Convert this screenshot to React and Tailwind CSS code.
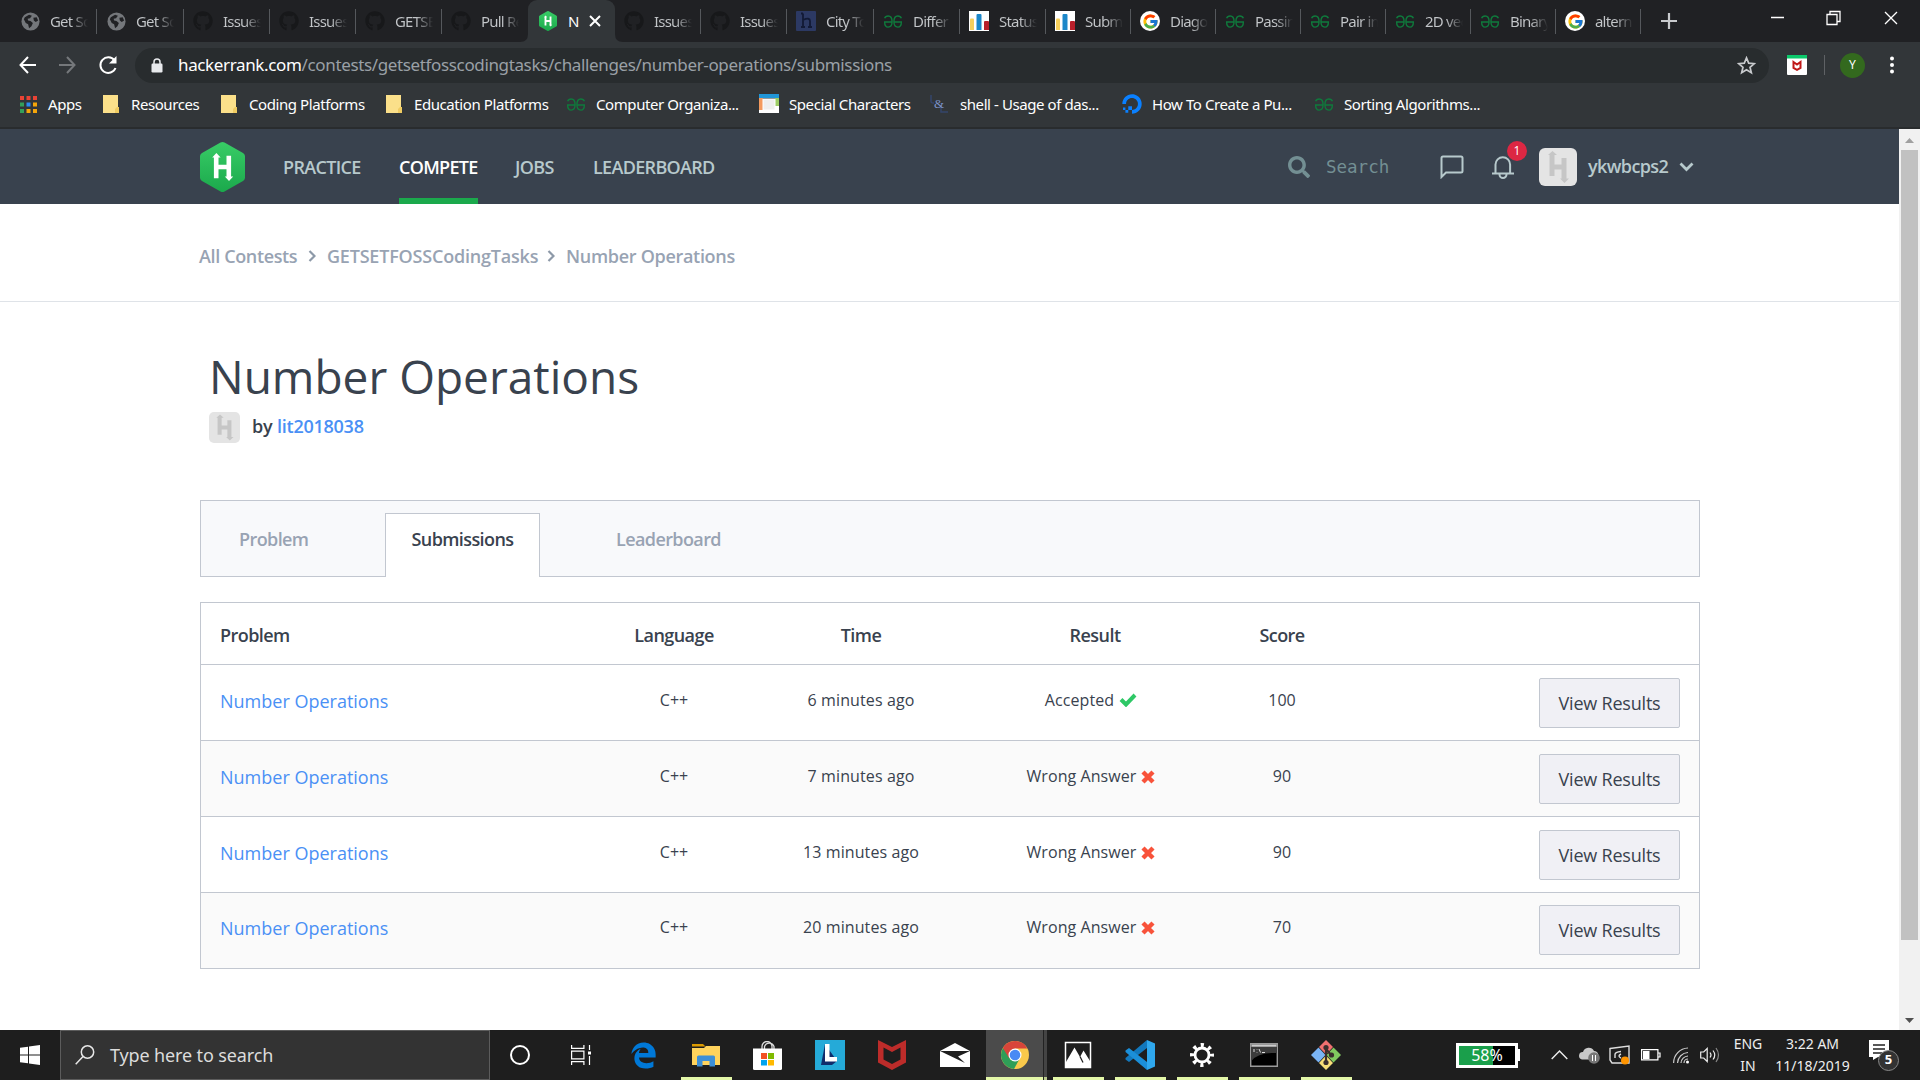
import React from "react";
import { FaGithub, FaDigitalOcean, FaEdgeLegacy, FaSearch } from "react-icons/fa";
import { FcGoogle } from "react-icons/fc";

const UI = "font-['Noto_Sans','Open_Sans',sans-serif]";

function Globe() {
  return (
    <svg viewBox="0 0 20 20" className="size-[19px]">
      <circle cx="10" cy="10" r="9.5" fill="#74777b" />
      <path d="M4 5.5 8.5 3l3 1-2 2.500-2.500.5.5 2 2.500.5 2.500 2-1.500 3.500-2.500 2-1-4-2.500-1.500L3 7.500z M13 6l3.500-.5L18 9l-2.500 1.500-2-1.500z" fill="#202124" />
    </svg>
  );
}

function Gfg() {
  return (
    <svg viewBox="0 0 20 14" className="h-[13px] w-5" fill="none" stroke="#0f7a3c" strokeWidth="1.500">
      <path d="M1 3.500C1.500 2 3 1 4.800 1 7.500 1 9 3.500 9 7s-1.500 6-4.200 6C2.500 13 1 11.500 1 7.500h8" />
      <path d="M19 3.500C18.500 2 17 1 15.200 1 12.500 1 11 3.500 11 7s1.500 6 4.200 6c2.300 0 3.800-1.500 3.800-5.500h-8" />
    </svg>
  );
}

function Bars() {
  return (
    <svg viewBox="0 0 20 20" className="size-5">
      <rect width="20" height="20" fill="#fff" />
      <path d="M1 19V8.500Q1 7.500 2 7.500h2Q5 7.500 5 8.500V19z" fill="#f7cf5b" />
      <path d="M7.500 19V4q0-1 1-1h3q1 0 1 1v15z" fill="#1c87c9" />
      <path d="M15 19v-8q0-1 1-1h3q1 0 1 1v8z" fill="#b81f2a" />
    </svg>
  );
}

function GoogleDot() {
  return (
    <span className="flex size-5 items-center justify-center rounded-full bg-white">
      <FcGoogle className="size-[17px]" />
    </span>
  );
}

function HBlock() {
  return (
    <svg viewBox="0 0 20 20" className="size-5">
      <rect width="20" height="20" rx="1" fill="#2c3963" />
      <path d="M7 2.500v13M7 9q7-3 7 1v5.500M5 2.500h2M5 16h4M12 16h4" stroke="#121a35" strokeWidth="1.800" fill="none" />
    </svg>
  );
}

function HexLogo({ className }) {
  return (
    <svg viewBox="0 0 45 50" className={className}>
      <defs>
        <linearGradient id="hex" x1="0" y1="0" x2="0" y2="1">
          <stop offset="0" stopColor="#38cc66" />
          <stop offset="1" stopColor="#1ba94c" />
        </linearGradient>
      </defs>
      <path d="M20.500.6q2-1.200 4 0L43 11q1.700 1 2 3v22q-.3 2-2 3L24.500 49.400q-2 1.200-4 0L2 39q-1.700-1-2-3V14q.3-2 2-3z" fill="url(#hex)" />
      <path d="M16.400 11l4.200 4.500h-2.100v7.300h8v-9h4.600v20.700h2.100L29 39l-4.200-4.500h1.700v-7.300h-8v9h-4.600V15.500h-1.700z" fill="#fff" />
    </svg>
  );
}

function Avatar({ className }) {
  return (
    <svg viewBox="0 0 38 38" className={className}>
      <rect width="38" height="38" rx="6" fill="#e4e4e4" />
      <path d="M13.500 3l4.500 4h-2.500v9.500h7V10h5v20.500H30L25.500 35 21 30.500h1.500v-9h-7V28h-5V7H9z" fill="#c6c6c6" />
    </svg>
  );
}

const tabIcons = {
  globe: <Globe />,
  github: <FaGithub className="size-5 text-[#17181a]" />,
  hr: <HexLogo className="h-5 w-[18px]" />,
  block: <HBlock />,
  gfg: <Gfg />,
  bars: <Bars />,
  google: <GoogleDot />,
};

const tabs = [
  ["globe", "Get So", "w-[86px]"],
  ["globe", "Get So", "w-[87px]"],
  ["github", "Issues", "w-[86px]"],
  ["github", "Issues", "w-[86px]"],
  ["github", "GETSE", "w-[86px]"],
  ["github", "Pull Re", "w-[86px]"],
  ["hr", "N", "w-[87px]"],
  ["github", "Issues", "w-[86px]"],
  ["github", "Issues", "w-[86px]"],
  ["block", "City To", "w-[87px]"],
  ["gfg", "Differ", "w-[86px]"],
  ["bars", "Status", "w-[86px]"],
  ["bars", "Subm", "w-[85px]"],
  ["google", "Diago", "w-[85px]"],
  ["gfg", "Passin", "w-[85px]"],
  ["gfg", "Pair in", "w-[85px]"],
  ["gfg", "2D vec", "w-[85px]"],
  ["gfg", "Binary", "w-[85px]"],
  ["google", "altern", "w-[85px]"],
];

function TabStrip() {
  return (
    <div className="flex h-[42px] bg-[#202124] pl-[11px]">
      {tabs.map(([icon, label, width], i) =>
        i === 6 ? (
          <div key={i} className={`relative flex shrink-0 items-center rounded-t-[9px] bg-[#323639] pl-[11px] ${width}`}>
            <svg viewBox="0 0 8 8" className="absolute bottom-0 -left-2 size-2"><path d="M8 0v8H0q8 0 8-8" fill="#323639" /></svg>
            <svg viewBox="0 0 8 8" className="absolute -right-2 bottom-0 size-2"><path d="M0 0v8h8Q0 8 0 0" fill="#323639" /></svg>
            {tabIcons[icon]}
            <span className="ml-[11px] text-[15px] text-white">{label}</span>
            <svg viewBox="0 0 12 12" className="absolute left-[61px] size-3" stroke="#fff" strokeWidth="2"><path d="M1 1l10 10M11 1 1 11" /></svg>
          </div>
        ) : (
          <div key={i} className={`flex shrink-0 items-center pl-[9px] ${width}`}>
            <span className="flex w-5 shrink-0 justify-center">{tabIcons[icon]}</span>
            <span className="ml-[10px] w-[38px] overflow-hidden bg-linear-to-r from-[#c4c7ca] from-55% to-transparent bg-clip-text text-[15px] tracking-[-0.8px] whitespace-nowrap text-transparent">{label}</span>
            {i !== 5 && <span className="ml-auto h-[25px] w-px bg-[#55585c]" />}
          </div>
        )
      )}
      <svg viewBox="0 0 16 16" className="mt-[13px] ml-[20px] size-4" stroke="#c8cacd" strokeWidth="2.200"><path d="M8 0v16M0 8h16" /></svg>
      <svg viewBox="0 0 128 16" className="mt-[10px] ml-[94px] h-4 w-32" fill="none" stroke="#fff" strokeWidth="1.300">
        <path d="M0 7.500h13M56 4.500h10v10H56zM59 4.500v-3h10v10h-3M114 2l12 12M126 2l-12 12" />
      </svg>
    </div>
  );
}

function Toolbar() {
  return (
    <div className="flex h-[46px] items-center bg-[#323639]">
      <svg viewBox="0 0 100 20" className="ml-[19px] h-5 w-[100px]" fill="none" strokeWidth="2">
        <path d="M17 10H1.500M9 2 1.500 10 9 18" stroke="#fff" />
        <path d="M40 10h15.500M48 2l7.500 8L48 18" stroke="#75787b" />
        <path d="M95.500 5.500A7.800 7.800 0 1 0 96.500 13" stroke="#fff" />
        <path d="M97.500 1v7.500H90z" fill="#fff" />
      </svg>
      <div className="ml-4 flex h-[35px] w-[1634px] items-center rounded-full bg-[#282c2e]">
        <svg viewBox="0 0 12 14" className="ml-4 h-[15px] w-3"><rect x=".5" y="5" width="11" height="9" rx="1.200" fill="#e8eaed" /><path d="M3 6V3.500a3 3 0 0 1 6 0V6" stroke="#e8eaed" strokeWidth="1.500" fill="none" /></svg>
        <span className="ml-[15px] text-[17px] tracking-[-0.36px] text-[#9aa0a6]"><span className="text-white">hackerrank.com</span>/contests/getsetfosscodingtasks/challenges/number-operations/submissions</span>
        <svg viewBox="0 0 20 20" className="mr-[13px] ml-auto size-[19px]" fill="none" stroke="#c8cacd" strokeWidth="1.800"><path d="M10 2l2.300 5.500 6 .5-4.600 3.900 1.400 5.800L10 14.600l-5.100 3.100 1.400-5.800L1.700 8l6-.5z" /></svg>
      </div>
      <svg viewBox="0 0 20 20" className="ml-[18px] size-5"><rect width="20" height="20" rx="1" fill="#fff" /><rect width="20" height="3.500" fill="#0bc96b" /><path d="M6.500 7l3.500 2.500L13.500 7v6L10 14.800 6.500 13z" fill="none" stroke="#c01818" strokeWidth="2" /></svg>
      <span className="ml-[17px] h-5 w-px bg-[#5f6265]" />
      <span className="ml-[15px] flex size-[25px] items-center justify-center rounded-full bg-[#33691e] text-[12px] text-white">Y</span>
      <svg viewBox="0 0 4 18" className="ml-[25px] h-[18px] w-1" fill="#fff"><circle cx="2" cy="2.500" r="2" /><circle cx="2" cy="9" r="2" /><circle cx="2" cy="15.500" r="2" /></svg>
    </div>
  );
}

const folder = (
  <svg viewBox="0 0 16 18" className="h-[18px] w-4"><path d="M0 0h15v12l1 1v5H0z" fill="#fbe08a" /><path d="M12 18v-4l2-2h2v6z" fill="#f0cc62" /></svg>
);
const bookmarks = [
  [<svg viewBox="0 0 17 17" className="size-[17px]"><path d="M0 0h4v4H0zM6.500 0h4v4h-4zM13 0h4v4h-4z" fill="#ea4335" /><path d="M0 6.500h4v4H0zM0 13h4v4H0z" fill="#34a05a" /><path d="M6.500 6.500h4v4h-4z" fill="#2b8bf2" /><path d="M13 6.500h4v4h-4zM6.500 13h4v4h-4zM13 13h4v4h-4z" fill="#f5a60a" /></svg>, "Apps", "w-[83px]", "ml-[11px]"],
  [folder, "Resources", "w-[118px]", "ml-[12px]"],
  [folder, "Coding Platforms", "w-[165px]", "ml-[12px]"],
  [folder, "Education Platforms", "w-[180px]", "ml-[12px]"],
  [<Gfg />, "Computer Organiza...", "w-[193px]", "ml-[10px]"],
  [<svg viewBox="0 0 20 20" className="size-5"><path d="M0 0h20v4H0z" fill="#2196d8" /><path d="M0 4h4v12H0z" fill="#f39a5f" /><path d="M16 4h4v8h-4z" fill="#9ccc65" /><path d="M0 16h20v3H0zM16 12h4v7h-4z" fill="#fff" /><path d="M4 5h12v11H4z" fill="#eee" stroke="#fff" /></svg>, "Special Characters", "w-[171px]", "ml-[10px]"],
  [<svg viewBox="0 0 20 20" className="size-5"><path d="M1 1v6q0 2.500 3 2M11 11v7h7" stroke="#34456b" strokeWidth="1.500" fill="none" /><text x="4" y="14" fontSize="13" fill="#7d93c9" fontFamily="Liberation Serif">&amp;</text></svg>, "shell - Usage of das...", "w-[192px]", "ml-[10px]"],
  [<FaDigitalOcean className="size-5 text-[#0a80ff]" />, "How To Create a Pu...", "w-[192px]", "ml-[10px]"],
  [<Gfg />, "Sorting Algorithms...", "w-[200px]", "ml-[10px]"],
];

function Bookmarks() {
  return (
    <div className="flex h-[41px] items-start border-b-2 border-[#292c2e] bg-[#323639] pt-[4px] pl-5">
      {bookmarks.map(([icon, label, width, gap]) => (
        <div key={label} className={`flex h-6 shrink-0 items-center whitespace-nowrap ${width}`}>
          {icon}
          <span className={`text-[15px] tracking-[-0.42px] text-white ${gap}`}>{label}</span>
        </div>
      ))}
    </div>
  );
}

function SiteHeader() {
  const item = "flex h-[75px] items-center border-b-[6px] pt-2 text-[18px] tracking-[-0.68px] font-semibold";
  return (
    <header className="flex h-[75px] items-center bg-[#39424e] pl-[200px]">
      <HexLogo className="h-[50px] w-[45px]" />
      <nav className="ml-[38px] flex text-[#b7c9cc]">
        <a className={`${item} mr-[38px] w-[78px] border-transparent`}>PRACTICE</a>
        <a className={`${item} mr-[37px] w-[79px] border-[#1ba94c] text-white`}>COMPETE</a>
        <a className={`${item} mr-[38px] w-[40px] border-transparent`}>JOBS</a>
        <a className={`${item} w-[121px] border-transparent`}>LEADERBOARD</a>
      </nav>
      <FaSearch className="ml-[574px] size-[22px] text-[#738f93]" />
      <span className="ml-4 w-[63px] pt-[2px] font-['DejaVu_Sans_Mono',monospace] text-[17.500px] text-[#738f93]">Search</span>
      <svg viewBox="0 0 24 24" className="ml-[51px] size-6" fill="none" stroke="#b7c9cc" strokeWidth="2"><path d="M1.500 22V3q0-1.500 1.500-1.500h18q1.500 0 1.500 1.500v13q0 1.500-1.500 1.500H6z" /></svg>
      <div className="relative ml-[27px] h-6 w-6">
        <svg viewBox="0 0 24 24" className="size-6" fill="none" stroke="#b7c9cc" strokeWidth="2"><path d="M1 18.500h22M4.500 18V9.500a7.300 7.300 0 0 1 14.600 0V18M8.500 19.500a3.500 3.500 0 0 0 7 0" /></svg>
        <span className="absolute -top-[14px] left-[16px] flex size-5 items-center justify-center rounded-full bg-[#dc2743] text-[12px] text-white">1</span>
      </div>
      <Avatar className="ml-6 size-[38px]" />
      <span className="ml-[11px] w-20 text-[18px] font-semibold tracking-[-0.6px] text-[#b7c9cc]">ykwbcps2</span>
      <svg viewBox="0 0 15 10" className="ml-[11px] h-[10px] w-[15px]" fill="none" stroke="#b7c9cc" strokeWidth="2.800"><path d="M1.500 1.500l6 6 6-6" /></svg>
    </header>
  );
}

function Crumb() {
  return <svg viewBox="0 0 8 12" className="h-3 w-2" fill="none" stroke="#8d99a8" strokeWidth="2.200"><path d="M1.500 1l5 5-5 5" /></svg>;
}

function Tick() {
  return <svg viewBox="0 0 18 14" className="h-[14px] w-[18px]" fill="none" stroke="#2ec866" strokeWidth="4"><path d="M2 6.500l5 5L16 2" /></svg>;
}

function Cross() {
  return <svg viewBox="0 0 14 14" className="mt-px size-[14px]" fill="none" stroke="#f8523a" strokeWidth="4.400"><path d="M2 2l10 10M12 2 2 12" /></svg>;
}

const rows = [
  ["6 minutes ago", "Accepted", "100"],
  ["7 minutes ago", "Wrong Answer", "90"],
  ["13 minutes ago", "Wrong Answer", "90"],
  ["20 minutes ago", "Wrong Answer", "70"],
];
const cols = "grid grid-cols-[378px_190px_184px_284px_90px_1fr]";

function Submissions() {
  return (
    <section className="mt-[25px] ml-[200px] w-[1500px] border border-[#c2c7d0] text-[#39424e]">
      <div className={`${cols} h-[61px] items-center pt-[3px] text-center text-[18px] font-semibold tracking-[-0.55px]`}>
        <span className="pl-[19px] text-left">Problem</span>
        <span>Language</span>
        <span>Time</span>
        <span>Result</span>
        <span>Score</span>
      </div>
      {rows.map(([time, result, score], i) => {
        const top = i === 3 ? "pt-[22px]" : "pt-[23px]";
        return (
          <div key={i} className={`${cols} h-[76px] border-t border-[#c2c7d0] text-center text-[16px] ${i % 2 ? "bg-[#fafafa]" : "bg-white"}`}>
            <span className={`${i === 3 ? "pt-[21px]" : "pt-[22px]"} pl-[19px] text-left text-[18px] leading-7 text-[#4a90f5]`}>Number Operations</span>
            <span className={`${top} leading-6`}>C++</span>
            <span className={`${top} leading-6 tracking-[0.11px]`}>{time}</span>
            <span className={`flex items-center justify-center gap-[5px] self-start pr-2 leading-6 tracking-[0.07px] ${top}`}>
              {result}
              {result === "Accepted" ? <Tick /> : <Cross />}
            </span>
            <span className={`${top} leading-6`}>{score}</span>
            <button className={`${i === 3 ? "mt-[12px]" : "mt-[13px]"} mr-[19px] flex h-[50px] w-[141px] items-center justify-center justify-self-end rounded-[2px] border border-[#c2c7d0] bg-[#f0f0f5] text-[18px] tracking-[-0.2px]`}>View Results</button>
          </div>
        );
      })}
    </section>
  );
}

function Page() {
  return (
    <div className="flex h-[901px] font-['Open_Sans',sans-serif]">
      <main className="w-[1899px] bg-white">
        <SiteHeader />
        <div className="flex h-[98px] items-center border-b border-[#dfe3e8] pt-[7px] pl-[199px] text-[18px] font-semibold text-[#98a3b3]">
          <span className="w-[109px] tracking-[-0.36px]">All Contests</span><Crumb />
          <span className="ml-[11px] w-[220px] tracking-[-0.2px]">GETSETFOSSCodingTasks</span><Crumb />
          <span className="ml-[11px] tracking-[-0.3px]">Number Operations</span>
        </div>
        <h1 className="mt-[41px] ml-[209px] text-[46px] leading-[66px] font-normal text-[#39424e]">Number Operations</h1>
        <div className="mt-[2px] ml-[209px] flex h-8 items-center text-[18px] font-semibold tracking-[-0.25px] text-[#39424e]">
          <Avatar className="size-[31px]" />
          <span className="-mt-px ml-[12px] w-[25px]">by</span><span className="-mt-px text-[#4a90f5]">lit2018038</span>
        </div>
        <div className="mt-[57px] ml-[200px] flex h-[77px] w-[1500px] border border-[#c2c7d0] bg-[#f8f9fb] text-[18px] font-semibold tracking-[-0.6px] text-[#98a3b3]">
          <span className="w-[184px] pt-[25px] pl-[38px]">Problem</span>
          <span className="mt-3 flex h-[64px] w-[155px] justify-center border border-b-0 border-[#c2c7d0] bg-white pt-[12px] text-[#39424e]">Submissions</span>
          <span className="pt-[25px] pl-[76px]">Leaderboard</span>
        </div>
        <Submissions />
      </main>
      <div className="flex w-[21px] flex-col items-center bg-[#f1f1f1]">
        <svg viewBox="0 0 21 21" className="h-[21px]"><path d="M6 14l4.500-5 4.500 5z" fill="#a0a0a0" /></svg>
        <div className="h-[790px] w-[17px] bg-[#c1c1c1]" />
        <svg viewBox="0 0 21 21" className="mt-auto h-[21px]"><path d="M6 9l4.500 5L15 9z" fill="#505050" /></svg>
      </div>
    </div>
  );
}

function AppButton({ children, active, focus, width }) {
  return (
    <div className={`flex h-full flex-col items-center ${width} ${focus ? "bg-[#4b4b4b]" : ""}`}>
      <div className="flex h-[47px] items-center justify-center pt-[3px]">{children}</div>
      {active && <span className={`h-[3px] bg-[#e3f7a8] ${focus ? "w-full" : "w-[51px]"}`} />}
    </div>
  );
}

function Taskbar() {
  return (
    <div className="flex h-[50px] bg-[#1e1e1e]">
      <div className="flex w-[60px] items-center justify-center">
        <svg viewBox="0 0 20 20" className="size-5" fill="#fff"><path d="M0 2.800l8-1.100v7.800H0zM9 1.500 20 0v9.500H9zM0 10.500h8v7.800l-8-1.100zM9 10.500h11V20L9 18.500z" /></svg>
      </div>
      <div className="flex h-[50px] w-[430px] items-center border border-[#5c5c5c] bg-[#333]">
        <svg viewBox="0 0 20 20" className="ml-[14px] size-5" fill="none" stroke="#e8e8e8" strokeWidth="1.500"><circle cx="12.500" cy="7" r="6.200" /><path d="M8 11.500.7 19.300" /></svg>
        <span className="ml-[15px] text-[18px] tracking-[-0.13px] text-[#dcdcdc]">Type here to search</span>
      </div>
      <AppButton width="w-[60px]"><span className="size-5 rounded-full border-[2.500px] border-white" /></AppButton>
      <AppButton width="w-[61px]">
        <svg viewBox="0 0 20 20" className="size-5" fill="none" stroke="#fff" strokeWidth="1.200"><path d="M.6 0v3.400h12.300V0M.6 20v-3.400h12.300V20M.6 6.200h12.300v7.600H.6zM18.500 0v5M18.500 11v9" /><path d="M17 6.500h3v3h-3z" fill="#fff" stroke="none" /></svg>
      </AppButton>
      <AppButton width="w-[64px]"><FaEdgeLegacy className="size-[27px] text-[#0078d7]" /></AppButton>
      <AppButton width="w-[62px]" active>
        <svg viewBox="0 0 28 24" className="h-6 w-7"><path d="M0 1h11l2.500 2.500H0z" fill="#dc9a00" /><path d="M0 5h12l2-2h14v19H0z" fill="#ffd35c" /><path d="M5 23.500V14q0-1.500 1.500-1.500h15Q23 12.500 23 14v9.500h-5.500V18h-7v5.500z" fill="#3d8fd6" /></svg>
      </AppButton>
      <AppButton width="w-[61px]">
        <svg viewBox="0 0 29 29" className="size-[29px]"><path d="M9 8V5.500a5 5 0 0 1 10 0V8M11.500 8V5.500a5 5 0 0 1 9.500 0V8" fill="none" stroke="#ddd" strokeWidth="1.300" /><path d="M0 7.500h29v20q0 1.500-1.500 1.500h-26Q0 29 0 27.500z" fill="#fff" /><path d="M8 12h6v6H8z" fill="#f25022" /><path d="M15 12h6v6h-6z" fill="#7fba00" /><path d="M8 19h6v5.500H8z" fill="#00a4ef" /><path d="M15 19h6v5.500h-6z" fill="#ffb900" /></svg>
      </AppButton>
      <AppButton width="w-[63px]">
        <svg viewBox="0 0 30 30" className="size-[30px]"><path d="M0 0h30v30H0z" fill="#25aad8" /><path d="M10 4 6 25h11l5-4z" fill="#102c6b" /><path d="M10 4h4.500v13H22v4.500H10z" fill="#fff" /></svg>
      </AppButton>
      <AppButton width="w-[62px]">
        <svg viewBox="0 0 28 30" className="h-[30px] w-7"><path fillRule="evenodd" d="M0 0l14 7L28 0v22.500L14 30 0 22.500zM5.500 7.500v12L14 24l8.500-4.500v-12L14 12z" fill="#bd2c2a" /></svg>
      </AppButton>
      <AppButton width="w-[63px]">
        <svg viewBox="0 0 30 24" className="h-6 w-[30px]"><path d="M0 8 15 0l15 8v16H0z" fill="#fff" /><path d="M0 8h30l-12 5.500 7 6.500z" fill="#1e1e1e" /></svg>
      </AppButton>
      <AppButton width="w-[57px]" active focus>
        <svg viewBox="0 0 28 28" className="size-7"><circle cx="14" cy="14" r="14" fill="#f9c94b" /><path d="M14 14 1.900 7A14 14 0 0 0 13 28l6-11z" fill="#2f9e58" /><path d="M14 7.500h12.400A14 14 0 0 0 1.900 7L8 17z" fill="#d8453a" /><circle cx="14" cy="14" r="6.500" fill="#fff" /><circle cx="14" cy="14" r="5.300" fill="#4a8af4" /></svg>
      </AppButton>
      <div className="flex w-[4px] flex-col justify-end border-l border-[#222] bg-[#444]"><span className="h-[3px] bg-[#b8c88c]" /></div>
      <AppButton width="w-[62px]" active>
        <svg viewBox="0 0 28 28" className="size-7"><path d="M1.500 1.500h25v25h-25z" fill="#1e1e1e" stroke="#fff" strokeWidth="1.500" /><path d="M2 21 10.500 6.500 16 16l3.500-6.500L26 20v6H2z" fill="#fff" /><path d="M16 15.500l3 6" stroke="#1e1e1e" strokeWidth="1.200" /></svg>
      </AppButton>
      <AppButton width="w-[62px]" active>
        <svg viewBox="0 0 30 30" className="size-[30px]"><path d="M22 0 30 3.500v23L22 30z" fill="#2fa8ee" /><path d="M22 0v8L4 22l-3.500-2.500v-1.500z" fill="#1278bd" /><path d="M22 30v-8L4 8 .5 10.500V12z" fill="#1b8fd9" /></svg>
      </AppButton>
      <AppButton width="w-[62px]" active>
        <svg viewBox="0 0 24 24" className="size-6" fill="none" stroke="#fff"><circle cx="12" cy="12" r="7" strokeWidth="2.800" /><circle cx="12" cy="12" r="10" strokeWidth="4" strokeDasharray="3.200 4.654" strokeDashoffset="1.600" /></svg>
      </AppButton>
      <AppButton width="w-[62px]" active>
        <svg viewBox="0 0 28 24" className="h-6 w-7"><path d="M.7.700h26.600v22.600H.7z" fill="#000" stroke="#9a9a9a" strokeWidth="1.400" /><path d="M1.400 1.400h25.200v2.400H1.400z" fill="#ccc" /><path d="M1.400 18Q8 9 26.600 10V4H1.400z" fill="#3c3c3c" /><path d="M4 6v3M7 6.500v.5M7 9v.5M9 6l1.500 3.500M12 9.500h3" stroke="#ddd" /></svg>
      </AppButton>
      <AppButton width="w-[62px]" active>
        <svg viewBox="0 0 30 30" className="size-[30px]"><path d="M15 0l7 7-7 7.500L8 7z" fill="#f07070" /><path d="M7.500 7.500 14.500 15l-7 7.500L0 15z" fill="#7ab4f5" /><path d="M22.500 7.500 30 15l-7.500 7.500L15.500 15z" fill="#80c860" /><path d="M15 15.500l7 7.500-7 7-7-7z" fill="#f7de78" /><path d="M15 7v16M15 9l5 6" stroke="#3a2e2e" strokeWidth="2.200" /><g fill="#3a2e2e"><circle cx="15" cy="7.500" r="2.600" /><circle cx="20.500" cy="15" r="2.600" /><circle cx="15" cy="22.500" r="2.600" /></g></svg>
      </AppButton>
      <div className="ml-auto flex h-full items-center">
        <div className="flex h-[25px] w-[62px] items-center justify-center border-[3px] border-white bg-linear-to-r from-[#1a9f4b] from-[61%] to-black to-[61%] text-[16px] text-white">58%</div>
        <span className="mr-[31px] h-3 w-[2px] bg-white" />
        <svg viewBox="0 0 17 10" className="h-[10px] w-[17px]" fill="none" stroke="#eee" strokeWidth="1.400"><path d="M.7 9 8.500 1l7.800 8" /></svg>
        <svg viewBox="0 0 21 18" className="ml-[11px] h-[18px] w-[21px]"><path d="M3 13.500a3.800 3.800 0 0 1 1-7.500 6 6 0 0 1 11-1 4.500 4.500 0 0 1 2 8.500z" fill="#c9c9c9" /><circle cx="15" cy="12" r="5.800" fill="#777" /><path d="M13.500 9v6M16.500 9v6" stroke="#fff" /></svg>
        <svg viewBox="0 0 21 20" className="ml-[9px] h-5 w-[21px]" fill="none" stroke="#ddd" strokeWidth="1.400"><path d="M1 3.500 20 1v17H3L1 15zM6 13V9.500Q6 7 12 6.500M12 9q-4 2 0 4" /><circle cx="16" cy="15.500" r="4" fill="#ff9400" stroke="none" /></svg>
        <svg viewBox="0 0 20 12" className="ml-[11px] h-3 w-5" fill="none" stroke="#fff" strokeWidth="1.200"><path d="M.6.600h16.300v10.300H.6zM17 4h2v4h-2" /><path d="M2 2h6.500v8H2z" fill="#fff" stroke="none" /></svg>
        <svg viewBox="0 0 17 17" className="ml-3 size-[17px]" fill="none" stroke="#ccc" strokeWidth="1.200"><path d="M.6 16A15 15 0 0 1 15 1M4.500 16A11 11 0 0 1 15 5.500M8 16a7.500 7.500 0 0 1 7-7M11 16a4 4 0 0 1 4-4" /><circle cx="14.500" cy="15" r="1.500" fill="#fff" stroke="none" /></svg>
        <svg viewBox="0 0 21 18" className="ml-[10px] h-[18px] w-[21px]" fill="none" stroke="#eee" strokeWidth="1.200"><path d="M.7 6h3l3.500-3.500v13L3.700 12h-3zM10 6.500q2 2.500 0 5M13 4.500q3.500 4.500 0 9" /><path d="M16 2q5 7 0 14" stroke="#888" /></svg>
        <div className="ml-[11px] flex w-[32px] flex-col items-center text-[14px] leading-[22px] whitespace-nowrap text-[#eee]"><span>ENG</span><span>IN</span></div>
        <div className="ml-[11px] flex w-[75px] flex-col items-center text-[14px] leading-[22px] whitespace-nowrap text-[#eee]"><span>3:22 AM</span><span>11/18/2019</span></div>
        <div className="relative mr-[21px] ml-[19px] h-[31px] w-[30px]">
          <svg viewBox="0 0 20 20" className="size-5"><path d="M0 0h20v17H9l-5 3v-3H0z" fill="#fff" /><path d="M4 5h12M4 9h12M4 13h9" stroke="#222" strokeWidth="1.300" /></svg>
          <span className="absolute top-[10px] left-[9px] flex size-[21px] items-center justify-center rounded-full border border-[#888] bg-[#333] text-[13px] font-bold text-white">5</span>
        </div>
      </div>
    </div>
  );
}

export default function App() {
  return (
    <div className={`flex h-[1080px] w-[1920px] flex-col overflow-hidden bg-white ${UI}`}>
      <TabStrip />
      <Toolbar />
      <Bookmarks />
      <Page />
      <Taskbar />
    </div>
  );
}
